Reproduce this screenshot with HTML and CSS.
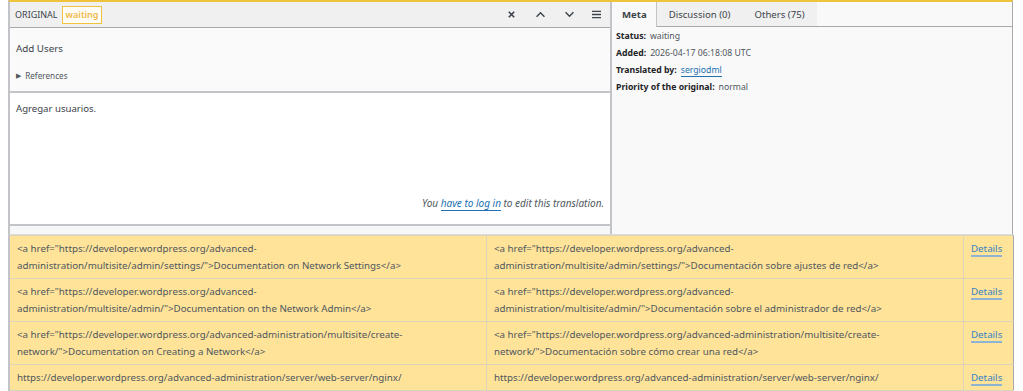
FILE: index.html
```html
<!DOCTYPE html>
<html lang="en">
<head>
  <meta charset="UTF-8">
  <title>Translation editor</title>
  <link rel="stylesheet" href="styles.css">
</head>
<body>
  <div class="editor">
    <div class="panel-main">
      <div class="panel-header">
        <div class="header-title">
          <span>ORIGINAL</span>
          <span class="badge">waiting</span>
        </div>
        <div class="header-actions">
          <button class="icon-btn" title="Close">
            <svg width="9" height="9" viewBox="0 0 10 10"><path d="M2 2 L8 8 M8 2 L2 8" stroke="#3c434a" stroke-width="1.8" fill="none"/></svg>
          </button>
          <button class="icon-btn" title="Previous">
            <svg width="11" height="7" viewBox="0 0 12 8"><path d="M1.5 6.5 L6 2 L10.5 6.5" stroke="#3c434a" stroke-width="1.6" fill="none"/></svg>
          </button>
          <button class="icon-btn" title="Next">
            <svg width="11" height="7" viewBox="0 0 12 8"><path d="M1.5 1.5 L6 6 L10.5 1.5" stroke="#3c434a" stroke-width="1.6" fill="none"/></svg>
          </button>
          <button class="icon-btn" title="Menu">
            <svg width="11" height="9" viewBox="0 0 12 10"><path d="M1 1.5 H11 M1 5 H11 M1 8.5 H11" stroke="#3c434a" stroke-width="1.5" fill="none"/></svg>
          </button>
        </div>
      </div>
      <div class="original">
        <p class="original-text">Add Users</p>
        <p class="references"><span class="arrow">&#9654;</span> References</p>
      </div>
      <div class="translation">
        <p class="translation-text">Agregar usuarios.</p>
        <p class="login-note">You <a href="#">have to log in</a> to edit this translation.</p>
      </div>
      <div class="panel-footer"></div>
    </div>
    <div class="panel-side">
      <div class="tabs">
        <button class="tab active">Meta</button>
        <button class="tab">Discussion (0)</button>
        <button class="tab">Others (75)</button>
        <div class="tab-fill"></div>
      </div>
      <dl class="meta">
        <div class="meta-row"><dt>Status:</dt><dd>waiting</dd></div>
        <div class="meta-row"><dt>Added:</dt><dd>2026-04-17 06:18:08 UTC</dd></div>
        <div class="meta-row"><dt>Translated by:</dt><dd><a href="#">sergiodml</a></dd></div>
        <div class="meta-row"><dt>Priority of the original:</dt><dd>normal</dd></div>
      </dl>
    </div>
  </div>

  <table class="strings">
    <tr>
      <td class="col-orig">&lt;a href="https://developer.wordpress.org/advanced-<br>administration/multisite/admin/settings/"&gt;Documentation on Network Settings&lt;/a&gt;</td>
      <td class="col-trans">&lt;a href="https://developer.wordpress.org/advanced-<br>administration/multisite/admin/settings/"&gt;Documentación sobre ajustes de red&lt;/a&gt;</td>
      <td class="col-act"><a class="details" href="#">Details</a></td>
    </tr>
    <tr>
      <td class="col-orig">&lt;a href="https://developer.wordpress.org/advanced-<br>administration/multisite/admin/"&gt;Documentation on the Network Admin&lt;/a&gt;</td>
      <td class="col-trans">&lt;a href="https://developer.wordpress.org/advanced-<br>administration/multisite/admin/"&gt;Documentación sobre el administrador de red&lt;/a&gt;</td>
      <td class="col-act"><a class="details" href="#">Details</a></td>
    </tr>
    <tr>
      <td class="col-orig">&lt;a href="https://developer.wordpress.org/advanced-administration/multisite/create-<br>network/"&gt;Documentation on Creating a Network&lt;/a&gt;</td>
      <td class="col-trans">&lt;a href="https://developer.wordpress.org/advanced-administration/multisite/create-<br>network/"&gt;Documentación sobre cómo crear una red&lt;/a&gt;</td>
      <td class="col-act"><a class="details" href="#">Details</a></td>
    </tr>
    <tr>
      <td class="col-orig">https://developer.wordpress.org/advanced-administration/server/web-server/nginx/</td>
      <td class="col-trans">https://developer.wordpress.org/advanced-administration/server/web-server/nginx/</td>
      <td class="col-act"><a class="details" href="#">Details</a></td>
    </tr>
    <tr>
      <td class="col-orig">&nbsp;</td>
      <td class="col-trans">&nbsp;</td>
      <td class="col-act">&nbsp;</td>
    </tr>
  </table>
</body>
</html>
```

FILE: styles.css
```css
body {
  margin: 0;
  padding: 0 10px 0 8px;
  font-family: "Noto Sans", "Open Sans", sans-serif;
  color: #3c434a;
  background-color: #ffffff;
}

p {
  margin: 0;
}

a {
  color: #2271b1;
  text-decoration: none;
  border-bottom: 1px solid #2271b1;
}

.editor {
  display: flex;
  width: 1005px;
  box-sizing: border-box;
  border-top: 2px solid #f0c33c;
  border-left: 2px solid #c3c4c7;
  border-right: 1px solid #a7aaad;
  border-bottom: 1px solid #dcdcde;
}

.panel-main {
  width: 600px;
  display: flex;
  flex-direction: column;
  border-right: 2px solid #c3c4c7;
}

.panel-header {
  display: flex;
  justify-content: space-between;
  align-items: center;
  height: 25px;
  padding: 0 8px 0 5px;
  background-color: #f0f0f1;
  border-bottom: 1px solid #a7aaad;
}

.header-title {
  display: flex;
  align-items: center;
  gap: 4px;
  font-size: 9px;
  color: #3c434a;
}

.badge {
  border: 1px solid #f0c33c;
  color: #f0b849;
  font-weight: 600;
  padding: 1px 3px;
  line-height: 14px;
  background-color: #fffdf6;
}

.header-actions {
  display: flex;
  align-items: center;
}

.icon-btn {
  width: 29px;
  height: 22px;
  border: none;
  background: none;
  padding: 0;
  display: flex;
  align-items: center;
  justify-content: center;
  cursor: pointer;
}

.icon-btn:last-child {
  width: 18px;
  justify-content: flex-end;
}

.original {
  height: 63px;
  padding: 0 6px;
  background-color: #fafafa;
  border-bottom: 2px solid #c3c4c7;
}

.original-text {
  font-size: 9.8px;
  margin-top: 13px;
  line-height: 16px;
}

.references {
  font-size: 8.2px;
  color: #50575e;
  margin-top: 12px;
  line-height: 14px;
}

.arrow {
  font-size: 6.5px;
  position: relative;
  top: -1px;
  margin-right: 2px;
}

.translation {
  height: 133px;
  padding: 0 6px;
  display: flex;
  flex-direction: column;
  justify-content: space-between;
  background-color: #ffffff;
  border-bottom: 2px solid #c3c4c7;
  box-sizing: border-box;
}

.translation-text {
  font-size: 9.6px;
  margin-top: 8px;
  line-height: 16px;
}

.login-note {
  text-align: right;
  font-style: italic;
  font-size: 10px;
  color: #50575e;
  margin-bottom: 14px;
  line-height: 14px;
}

.login-note a {
  font-style: italic;
}

.panel-footer {
  height: 8px;
  background-color: #f6f7f7;
}

.panel-side {
  flex: 1;
  background-color: #f9f9f9;
}

.tabs {
  display: flex;
  height: 25px;
}

.tab {
  border: none;
  border-bottom: 1px solid #a7aaad;
  background-color: #f0f0f1;
  font-family: inherit;
  font-size: 9.6px;
  color: #3c434a;
  padding: 0 12px;
  cursor: pointer;
}

.tab.active {
  background-color: #f9f9f9;
  font-weight: bold;
  border: none;
  border-right: 1px solid #c3c4c7;
  padding: 0 9px 0 10px;
}

.tab-fill {
  flex: 1;
  background-color: #f9f9f9;
  border-bottom: 1px solid #a7aaad;
}

.meta {
  margin: 0;
  padding: 1px 4px 0;
  font-size: 8.7px;
}

.meta-row {
  display: flex;
  gap: 4px;
  line-height: 17px;
}

.meta dt {
  font-weight: bold;
  color: #1d2327;
}

.meta dd {
  margin: 0;
  color: #50575e;
}

.strings {
  width: 1005px;
  border-collapse: collapse;
  table-layout: fixed;
  font-size: 9.75px;
  color: #50575e;
}

.strings td {
  background-color: #ffe399;
  border: 1px solid #dcd4b8;
  padding: 4px 7px;
  line-height: 17px;
  vertical-align: top;
}

.strings td.col-orig {
  width: 462px;
  border-left: 2px solid #c3c4c7;
}

.strings td.col-trans {
  width: 462px;
}

.strings td.col-act {
  width: 35px;
  border-right: 1px solid #a7aaad;
}

.details {
  color: #3582c4;
  border-bottom: 2px solid #8fb3d4;
}
```
